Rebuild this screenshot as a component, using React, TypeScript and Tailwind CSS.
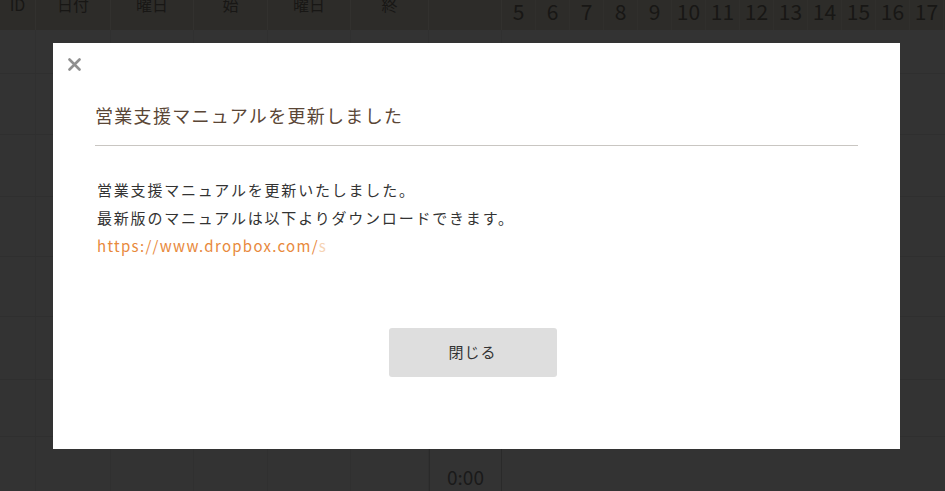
const leftCols = [36, 75, 83, 74, 83, 78, 73]
const headLabels = ['ID', '日付', '曜日', '始', '曜日', '終', '']
const dayNums = [5, 6, 7, 8, 9, 10, 11, 12, 13, 14, 15, 16, 17]
const rows = [44, 61, 62, 60, 60, 63, 57]

function BackgroundTable() {
  return (
    <div className="flex h-[491px] w-[945px] flex-col overflow-hidden bg-[#333333]">
      {/* header */}
      <div className="flex h-[30px] bg-[#2d2c29]">
        {leftCols.map((w, i) => (
          <div
            key={i}
            style={{ width: w }}
            className="-mt-[8px] border-r border-[#32312e] text-center text-[16px] text-[#181715]"
          >
            {headLabels[i]}
          </div>
        ))}
        {dayNums.map((n) => (
          <div key={n} className="w-[34px] border-r border-[#302f2c] text-center text-[21px] leading-[22px] text-[#181715]">
            {n}
          </div>
        ))}
      </div>
      {rows.map((h, r) => (
        <div key={r} style={{ height: h }} className="flex shrink-0 border-b border-[#2f2f2f]">
          {leftCols.map((w, i) => (
            <div key={i} style={{ width: w }} className="border-r border-[#303030]" />
          ))}
          <div className="flex-1" />
        </div>
      ))}
      <div className="flex flex-1">
        {leftCols.map((w, i) => (
          <div key={i} style={{ width: w }} className={i === 6 ? 'border-x border-[#2a2a2a] text-center' : 'border-r border-[#303030]'}>
            {i === 6 && <span className="mt-[26px] block text-[19px] text-[#1a1a1a]">0:00</span>}
          </div>
        ))}
      </div>
    </div>
  )
}

export default function App() {
  return (
    <div className="relative h-[491px] w-[945px] overflow-hidden" style={{ fontFamily: '"Noto Sans CJK JP", "Noto Sans", sans-serif' }}>
      <BackgroundTable />

      {/* Modal */}
      <div className="absolute inset-0 pl-[53px] pt-[43px]">
        <div className="relative h-[406px] w-[847px] bg-white">
          <button className="absolute left-[14px] top-[14px] flex h-[14px] w-[14px] items-center justify-center">
            <svg width="13" height="13" viewBox="0 0 13 13">
              <path d="M1.5 1.5 L11.5 11.5 M11.5 1.5 L1.5 11.5" stroke="#8f8f8f" strokeWidth="2.6" strokeLinecap="round" />
            </svg>
          </button>

          <div className="px-[42px] pt-[58px]">
            <h2 className="border-b border-[#c9c6c2] pb-[16px] text-[18px] leading-[28px] tracking-[1.3px] text-[#5a4636]">
              営業支援マニュアルを更新しました
            </h2>
            <div className="mt-[30px] pl-[2px] text-[15px] leading-[28px] tracking-[1.8px] text-[#333333]">
              <p>営業支援マニュアルを更新いたしました。</p>
              <p>最新版のマニュアルは以下よりダウンロードできます。</p>
              <p className="text-[15px] tracking-[1.3px] text-[#e8893c]">
                https://www.dropbox.com/<span className="text-[#f6d3b4]">s</span>
              </p>
            </div>
            <div className="mt-[68px] flex justify-center pr-[8px]">
              <button className="h-[49px] w-[168px] rounded-[3px] bg-[#dedede] text-[15px] tracking-[1px] text-[#333333]">
                閉じる
              </button>
            </div>
          </div>
        </div>
      </div>
    </div>
  )
}
